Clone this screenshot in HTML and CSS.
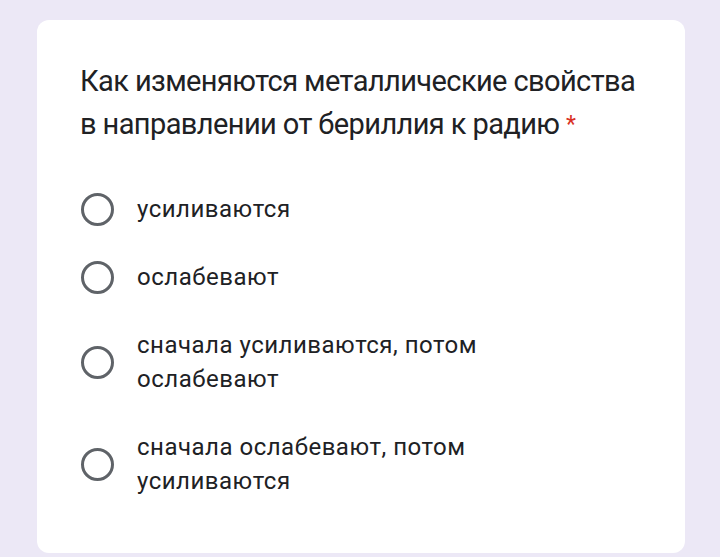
FILE: index.html
```html
<!DOCTYPE html>
<html lang="ru">
<head>
<meta charset="utf-8">
<link rel="stylesheet" href="styles.css">
</head>
<body>
<div class="card">
  <div class="title">Как изменяются металлические свойства в направлении от бериллия к радию <span class="req">*</span></div>
  <div class="options">
    <div class="option"><span class="radio"></span><span class="label">усиливаются</span></div>
    <div class="option"><span class="radio"></span><span class="label">ослабевают</span></div>
    <div class="option"><span class="radio"></span><span class="label">сначала усиливаются, потом ослабевают</span></div>
    <div class="option"><span class="radio"></span><span class="label">сначала ослабевают, потом усиливаются</span></div>
  </div>
</div>
</body>
</html>
```
FILE: styles.css
```css
html, body {
  margin: 0;
  padding: 0;
  background: #ece8f6;
  height: 557px;
  overflow: hidden;
}
body {
  font-family: Roboto, "Noto Sans", sans-serif;
  color: #202124;
  padding-top: 20px;
  padding-left: 37px;
}
.card {
  box-sizing: border-box;
  width: 648px;
  height: 533px;
  background: #ffffff;
  border-radius: 12px;
  padding: 40px 43px 0 43px;
}
.title {
  font-size: 29px;
  line-height: 43px;
  letter-spacing: -0.6px;
  width: 560px;
}
.req {
  color: #d93025;
  font-size: 23px;
  vertical-align: 2px;
}
.options {
  margin-top: 46px;
  display: flex;
  flex-direction: column;
  gap: 34px;
}
.option {
  display: flex;
  align-items: center;
}
.radio {
  flex: none;
  box-sizing: border-box;
  width: 33px;
  height: 33px;
  border: 3px solid #5f6368;
  border-radius: 50%;
  margin-left: 1px;
  margin-right: 23px;
}
.label {
  font-size: 24px;
  line-height: 34px;
  letter-spacing: 0.5px;
  width: 360px;
}
```
